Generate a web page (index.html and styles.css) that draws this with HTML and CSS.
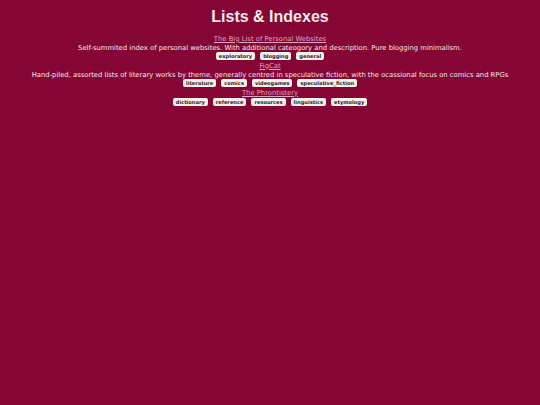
FILE: index.html
```html
<!DOCTYPE html>
<html>
<head>
<meta charset="utf-8">
<link rel="stylesheet" href="styles.css">
</head>
<body>
<h1 class="title">Lists &amp; Indexes</h1>
<div class="list">
  <div class="entry">
    <a class="link" href="#">The Big List of Personal Websites</a>
    <p class="desc">Self-summited index of personal websites. With additional cateogory and description. Pure blogging minimalism.</p>
    <div class="tags"><span class="tag">exploratory</span><span class="tag">blogging</span><span class="tag">general</span></div>
  </div>
  <div class="entry">
    <a class="link" href="#">FigCat</a>
    <p class="desc">Hand-piled, assorted lists of literary works by theme, generally centred in speculative fiction, with the ocassional focus on comics and RPGs</p>
    <div class="tags"><span class="tag">literature</span><span class="tag">comics</span><span class="tag">videogames</span><span class="tag">speculative_fiction</span></div>
  </div>
  <div class="entry">
    <a class="link" href="#">The Phrontistery</a>
    <div class="tags"><span class="tag">dictionary</span><span class="tag">reference</span><span class="tag">resources</span><span class="tag">linguistics</span><span class="tag">etymology</span></div>
  </div>
</div>
</body>
</html>
```
FILE: styles.css
```css
html, body {
  margin: 0;
  padding: 0;
  background: #850634;
}
body {
  font-family: "DejaVu Sans", Verdana, sans-serif;
  color: #f7eaea;
  text-align: center;
  font-size: 6.8px;
  padding-top: 6.5px;
}
.title {
  margin: 0 0 8px;
  font-family: "Liberation Sans", Arial, sans-serif;
  font-size: 16px;
  font-weight: bold;
  color: #f7eaea;
  line-height: 20px;
}
.entry {
  display: flex;
  flex-direction: column;
  align-items: center;
  padding-bottom: 1px;
}
.link {
  color: #e2a3c6;
  text-decoration: underline;
  line-height: 9px;
}
.desc {
  margin: 0;
  line-height: 8px;
}
.tags {
  display: flex;
  justify-content: center;
  align-items: center;
  gap: 5px;
  height: 9px;
}
.tag {
  background: #f8f0ea;
  color: #2a1a1e;
  font-size: 5.1px;
  font-weight: bold;
  border-radius: 2px;
  padding: 0 3px;
  line-height: 8.5px;
}
```
